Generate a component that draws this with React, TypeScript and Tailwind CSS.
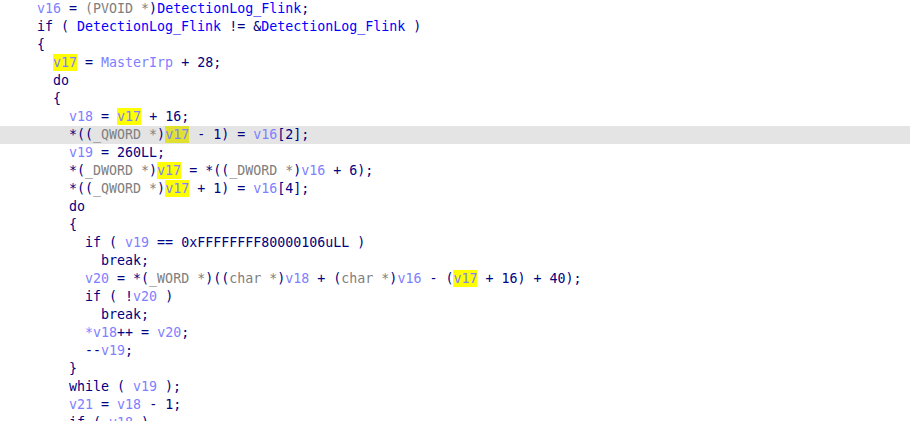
type Kind = "k" | "v" | "c" | "g" | "h" | "hc";

type Seg = [string, Kind];

const color: Record<Kind, string> = {
  k: "text-[#000080]",
  v: "text-[#8080ff]",
  c: "text-[#808080]",
  g: "text-[#0000ff]",
  h: "text-[#8080ff] bg-[#ffff00]",
  hc: "text-[#8080ff] bg-[#e0e030]",
};

// decompiled listing, one entry per line
const lines: { indent: number; segs: Seg[]; current?: boolean }[] = [
  { indent: 0, segs: [["v16", "v"], [" = ", "k"], ["(PVOID *", "c"], [")", "k"], ["DetectionLog_Flink", "g"], [";", "k"]] },
  { indent: 0, segs: [["if ( ", "k"], ["DetectionLog_Flink", "g"], [" != &", "k"], ["DetectionLog_Flink", "g"], [" )", "k"]] },
  { indent: 0, segs: [["{", "k"]] },
  { indent: 1, segs: [["v17", "h"], [" = ", "k"], ["MasterIrp", "v"], [" + 28;", "k"]] },
  { indent: 1, segs: [["do", "k"]] },
  { indent: 1, segs: [["{", "k"]] },
  { indent: 2, segs: [["v18", "v"], [" = ", "k"], ["v17", "h"], [" + 16;", "k"]] },
  {
    indent: 2,
    current: true,
    segs: [["*((", "k"], ["_QWORD *", "c"], [")", "k"], ["v17", "hc"], [" - 1) = ", "k"], ["v16", "v"], ["[2];", "k"]],
  },
  { indent: 2, segs: [["v19", "v"], [" = 260LL;", "k"]] },
  {
    indent: 2,
    segs: [["*(", "k"], ["_DWORD *", "c"], [")", "k"], ["v17", "h"], [" = *((", "k"], ["_DWORD *", "c"], [")", "k"], ["v16", "v"], [" + 6);", "k"]],
  },
  { indent: 2, segs: [["*((", "k"], ["_QWORD *", "c"], [")", "k"], ["v17", "h"], [" + 1) = ", "k"], ["v16", "v"], ["[4];", "k"]] },
  { indent: 2, segs: [["do", "k"]] },
  { indent: 2, segs: [["{", "k"]] },
  { indent: 3, segs: [["if ( ", "k"], ["v19", "v"], [" == 0xFFFFFFFF80000106uLL )", "k"]] },
  { indent: 4, segs: [["break;", "k"]] },
  {
    indent: 3,
    segs: [
      ["v20", "v"],
      [" = *(", "k"],
      ["_WORD *", "c"],
      [")((", "k"],
      ["char *", "c"],
      [")", "k"],
      ["v18", "v"],
      [" + (", "k"],
      ["char *", "c"],
      [")", "k"],
      ["v16", "v"],
      [" - (", "k"],
      ["v17", "h"],
      [" + 16) + 40);", "k"],
    ],
  },
  { indent: 3, segs: [["if ( !", "k"], ["v20", "v"], [" )", "k"]] },
  { indent: 4, segs: [["break;", "k"]] },
  { indent: 3, segs: [["*", "v"], ["v18", "v"], ["++ = ", "k"], ["v20", "v"], [";", "k"]] },
  { indent: 3, segs: [["--", "k"], ["v19", "v"], [";", "k"]] },
  { indent: 2, segs: [["}", "k"]] },
  { indent: 2, segs: [["while ( ", "k"], ["v19", "v"], [" );", "k"]] },
  { indent: 2, segs: [["v21", "v"], [" = ", "k"], ["v18", "v"], [" - 1;", "k"]] },
  { indent: 2, segs: [["if ( ", "k"], ["v18", "v"], [" )", "k"]] },
];

export default function App() {
  return (
    <div className="w-[910px] h-[421px] overflow-hidden bg-white font-['DejaVu_Sans_Mono',monospace] text-[13.3px]">
      {lines.map((line, i) => (
        <div
          key={i}
          className={`h-[18px] leading-[18px] whitespace-pre pl-[37px] ${line.current ? "bg-[#e4e4e4]" : ""}`}
        >
          <span>{"  ".repeat(line.indent)}</span>
          {line.segs.map(([text, kind], j) => (
            <span key={j} className={`${color[kind]} ${kind === "h" || kind === "hc" ? "inline-block h-[17px]" : ""}`}>
              {text}
            </span>
          ))}
        </div>
      ))}
    </div>
  );
}
